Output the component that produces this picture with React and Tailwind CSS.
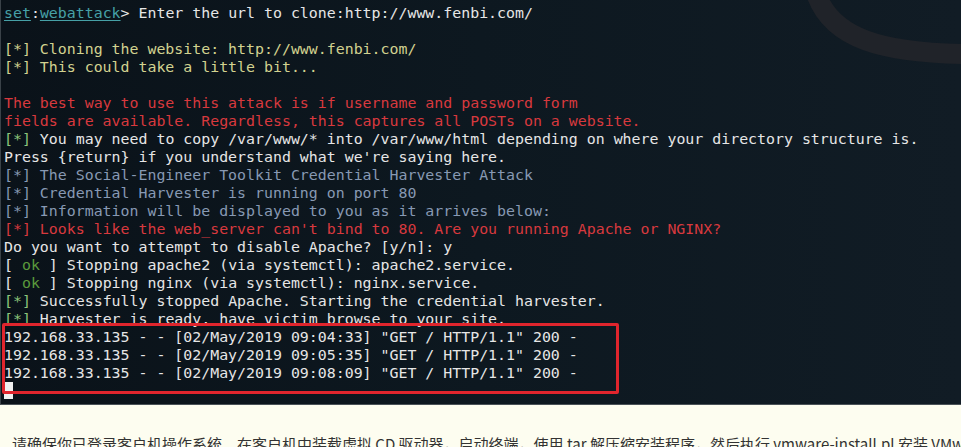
import React from "react";

const W = "text-[#e6e6e6]";
const Y = "text-[#d2d290]";
const R = "text-[#d8393e]";
const G = "text-[#8dc67c]";
const B = "text-[#8799b3]";
const OK = "text-[#5b9a3c]";

// each line: list of [className, text]
const lines = [
  [],
  [[Y, "[*] Cloning the website: http://www.fenbi.com/"]],
  [[Y, "[*] This could take a little bit..."]],
  [],
  [[R, "The best way to use this attack is if username and password form"]],
  [[R, "fields are available. Regardless, this captures all POSTs on a website."]],
  [[G, "[*]"], [W, " You may need to copy /var/www/* into /var/www/html depending on where your directory structure is."]],
  [[W, "Press {return} if you understand what we're saying here."]],
  [[B, "[*] The Social-Engineer Toolkit Credential Harvester Attack"]],
  [[B, "[*] Credential Harvester is running on port 80"]],
  [[B, "[*] Information will be displayed to you as it arrives below:"]],
  [[R, "[*] Looks like the web_server can't bind to 80. Are you running Apache or NGINX?"]],
  [[W, "Do you want to attempt to disable Apache? [y/n]: y"]],
  [[W, "[ "], [OK, "ok"], [W, " ] Stopping apache2 (via systemctl): apache2.service."]],
  [[W, "[ "], [OK, "ok"], [W, " ] Stopping nginx (via systemctl): nginx.service."]],
  [[G, "[*]"], [W, " Successfully stopped Apache. Starting the credential harvester."]],
  [[G, "[*]"], [W, " Harvester is ready, have victim browse to your site."]],
  [[W, '192.168.33.135 - - [02/May/2019 09:04:33] "GET / HTTP/1.1" 200 -']],
  [[W, '192.168.33.135 - - [02/May/2019 09:05:35] "GET / HTTP/1.1" 200 -']],
  [[W, '192.168.33.135 - - [02/May/2019 09:08:09] "GET / HTTP/1.1" 200 -']],
];

export default function App() {
  return (
    <div className="w-[961px] h-[447px] overflow-hidden bg-[#fdfdf0]">
      {/* terminal */}
      <div className="relative h-[405px] overflow-hidden bg-gradient-to-r from-[#0a1219] via-[#0d1820] to-[#111c25] border-b border-[#4a5258] border-l border-l-[#3a4248]">
        {/* dragon curve in the wallpaper */}
        <svg className="absolute inset-0" width="961" height="405">
          <path d="M816 -4 C 832 38, 880 53, 965 54" stroke="#202329" strokeWidth="20" fill="none" />
        </svg>

        <div className="relative pt-[4px] pl-[3px] font-['DejaVu_Sans_Mono',monospace] text-[14.9px] leading-[18px] whitespace-pre">
          <div className="h-[18px]">
            <span className="text-[#46a0a6] underline underline-offset-2">set</span>
            <span className={W}>:</span>
            <span className="text-[#46a0a6] underline underline-offset-2">webattack</span>
            <span className={W}>{"> Enter the url to clone:http://www.fenbi.com/"}</span>
          </div>
          {lines.map((segs, i) => (
            <div key={i} className="h-[18px]">
              {segs.map(([c, t], j) => (
                <span key={j} className={c}>{t}</span>
              ))}
            </div>
          ))}
          <div className="h-[18px] flex">
            <span className="w-[9px] h-[17px] bg-[#f0f0f0]" />
          </div>
        </div>

        {/* red highlight box */}
        <div className="absolute left-[1px] top-[323px] w-[617px] h-[71px] border-[3px] border-[#e0252d] rounded-[2px]" />
      </div>

      {/* document strip below */}
      <div className="pt-[29px] pl-[12px] whitespace-nowrap text-[15px] leading-[20px] text-[#333333] font-['Noto_Sans_CJK_SC',sans-serif]">
        请确保你已登录客户机操作系统。在客户机中装载虚拟 CD 驱动器，启动终端，使用 tar 解压缩安装程序，然后执行 vmware-install.pl 安装 VMware Tools。
      </div>
    </div>
  );
}
